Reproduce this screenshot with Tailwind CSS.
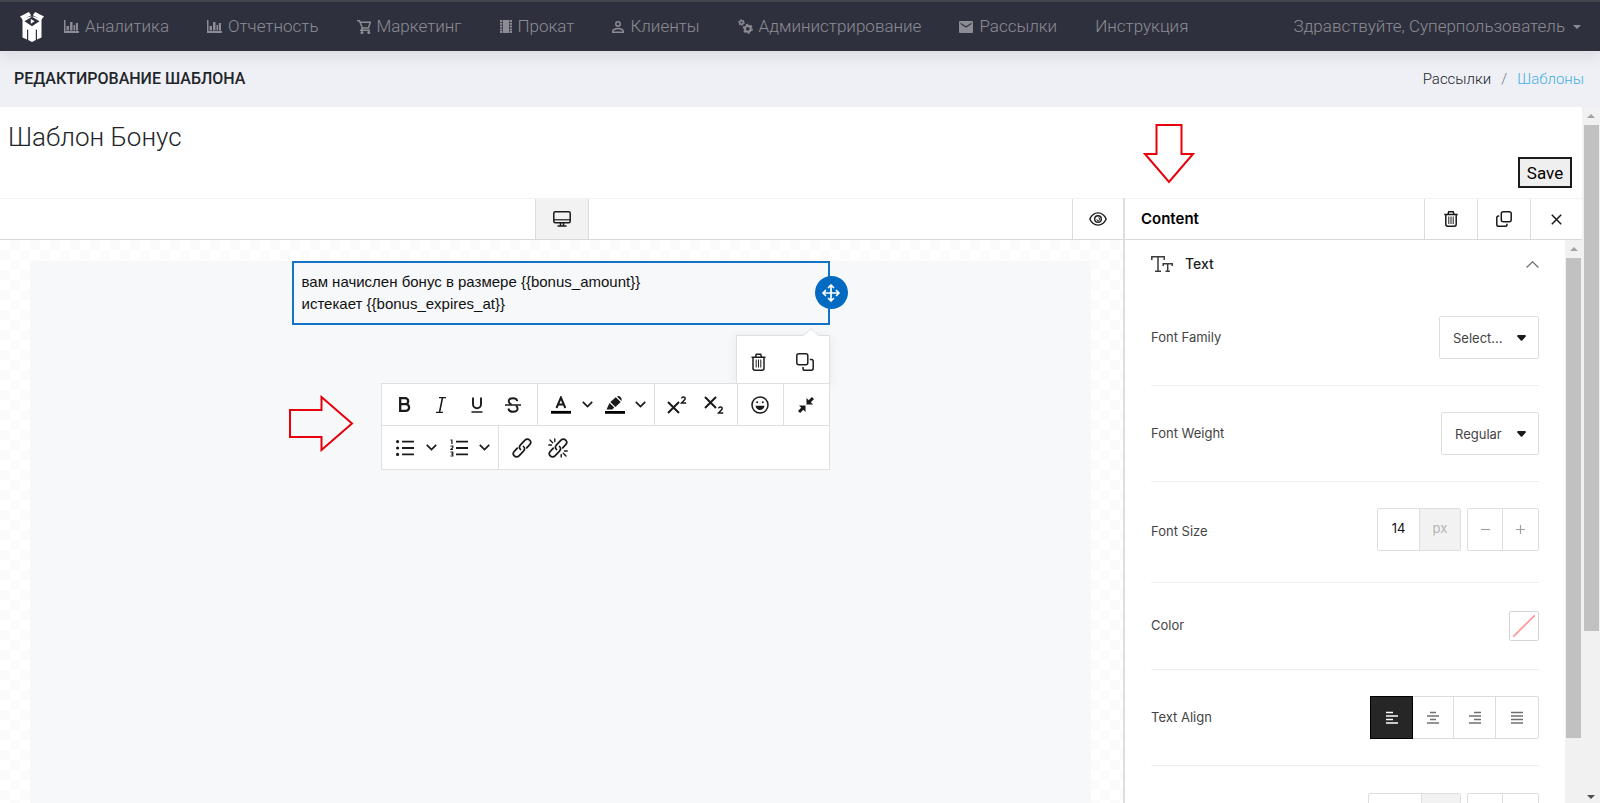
<!DOCTYPE html>
<html lang="ru">
<head>
    <meta charset="utf-8"/>
    <meta content="width=device-width, initial-scale=1.0" name="viewport"/>
    <title>Редактирование шаблона</title>
    <script src="https://cdn.jsdelivr.net/npm/@tailwindcss/browser@4"></script>
</head>
<body class="h-screen flex flex-col overflow-hidden bg-white font-['Roboto','Noto_Sans',sans-serif] text-[#212529]">

    <!-- Top navigation -->
    <header class="relative z-10 h-[51px] shrink-0 flex items-center pl-5 pr-[19px] bg-[#2f303d] border-t-2 border-[#43464e] shadow-[0_4px_16px_rgba(30,50,60,0.12)] text-[#8c8d94] text-[17px] font-light">
        <a href="#" class="mr-5" aria-label="Главная">
            <svg class="w-6 h-[30px]" viewBox="0 0 24 30" fill="#fff">
                <path d="M0 4.500 8.800 0l2.400 3.200L2.800 7.800zM24 4.500 15.200 0l-2.400 3.200 8.400 4.600z"/>
                <path d="M2.500 7 12 4l9.500 3v18.500l-4.500 2V17.200l-1.200.9V28L12 30l-3.800-2v-9.900L7 17.200v10.300l-4.500-2z"/>
                <path d="m4.500 9.300 7.500-4.500 7.500 4.500-7.500 4.900z" fill="#2f303d"/>
                <path d="M12 2v4" stroke="#2f303d" stroke-width="1.500"/>
                <path d="M10.800 7v4.800L14.600 9.300z"/>
            </svg>
        </a>
        <nav class="flex items-center gap-[38px]">
            <a href="#" class="flex items-center gap-1.5">
                <svg class="w-[15px] h-[13px]" viewBox="0 0 15 13" fill="currentColor"><path d="M0 0h1.500v11H15v2H0zM2.500 6H5v4.500H2.500zM6 2h2.500v8.500H6zM9.500 5H11v5.500H9.500zM11.800 3H14v7.500h-2.200z"/></svg>
                Аналитика
            </a>
            <a href="#" class="flex items-center gap-1.5">
                <svg class="w-[15px] h-[13px]" viewBox="0 0 15 13" fill="currentColor"><path d="M0 0h1.500v11H15v2H0zM2.500 6H5v4.500H2.500zM6 2h2.500v8.500H6zM9.500 5H11v5.500H9.500zM11.800 3H14v7.500h-2.200z"/></svg>
                Отчетность
            </a>
            <a href="#" class="flex items-center gap-1.5">
                <svg class="w-[14px] h-[14px]" viewBox="0 0 14 14" fill="none" stroke="currentColor" stroke-width="1.500"><path d="M0 .8h2.400l3 7.200h6l2-5.800H3M5.400 8 4 10.300h9"/><circle cx="5" cy="12.500" r=".8"/><circle cx="11.800" cy="12.500" r=".8"/></svg>
                Маркетинг
            </a>
            <a href="#" class="flex items-center gap-1.5">
                <svg class="w-3 h-[13px]" viewBox="0 0 12 13" fill="currentColor"><path d="M3 0h6v13H3zM0 0h2.400v2H0zM0 2.800h2.400v2H0zM0 5.600h2.400v2H0zM0 8.400h2.400v2H0zM0 11h2.400v2H0zM9.600 0H12v2H9.600zM9.600 2.800H12v2H9.600zM9.600 5.600H12v2H9.600zM9.600 8.400H12v2H9.600zM9.600 11H12v2H9.600z"/></svg>
                Прокат
            </a>
            <a href="#" class="flex items-center gap-1.5">
                <svg class="w-3 h-3" viewBox="0 0 12 12" fill="none" stroke="currentColor" stroke-width="1.500"><circle cx="6" cy="3" r="2.200"/><path d="M.8 11.200V10C.8 8.500 4 7.500 6 7.500s5.200 1 5.200 2.500v1.200z"/></svg>
                Клиенты
            </a>
            <a href="#" class="flex items-center gap-1.5">
                <svg class="w-[15px] h-[15px]" viewBox="0 0 15 15" fill="none" stroke="currentColor"><circle cx="3.500" cy="3.500" r="1.800" stroke-width="1.400"/><circle cx="3.500" cy="3.500" r="2.900" stroke-width="1" stroke-dasharray="1.500 1.500"/><circle cx="9.800" cy="9.800" r="2.900" stroke-width="2"/><circle cx="9.800" cy="9.800" r="4.400" stroke-width="1.300" stroke-dasharray="2.300 2.300"/></svg>
                Администрирование
            </a>
            <a href="#" class="flex items-center gap-1.5">
                <svg class="w-[14px] h-[12px]" viewBox="0 0 14 12" fill="currentColor"><path fill-rule="evenodd" d="M1 0h12a1 1 0 0 1 1 1v10a1 1 0 0 1-1 1H1a1 1 0 0 1-1-1V1a1 1 0 0 1 1-1zm.5 1.800v1.300L7 6.700l5.500-3.600V1.800L7 5.300z"/></svg>
                Рассылки
            </a>
            <a href="#">Инструкция</a>
        </nav>
        <button type="button" class="ml-auto flex items-center gap-2">
            Здравствуйте, Суперпользователь
            <svg class="w-2 h-1" viewBox="0 0 8 4" fill="currentColor"><path d="M0 0h8L4 4z"/></svg>
        </button>
    </header>

    <!-- Page title bar -->
    <div class="h-14 shrink-0 flex items-center justify-between px-[14px] pr-4 bg-[#eff0f6]">
        <h1 class="text-base font-medium uppercase">Редактирование шаблона</h1>
        <nav class="flex gap-2.5 text-[15px] font-light">
            <a href="#">Рассылки</a>
            <span class="text-[#6c757d]">/</span>
            <a href="#" class="text-[#44b1e4]">Шаблоны</a>
        </nav>
    </div>

    <div class="flex-1 min-h-0 flex">
        <main class="flex-1 min-w-0 flex flex-col">
            <div class="relative h-[91px] shrink-0 px-2 pt-3 flex justify-between">
                <h2 class="text-[26px] leading-9 font-light">Шаблон Бонус</h2>
                <svg class="absolute right-[387px] top-4 w-[52px] h-[61px]" viewBox="0 0 52 61" fill="none" stroke="#e8000b" stroke-width="2"><path d="M13.500 2h25v29H50L26 59 2 31h11.500z"/></svg>
                <button type="button" class="self-end mb-2.5 mr-0.5 w-[54px] h-[31px] border-2 border-[#1b1b1b] bg-[#efefef] text-black text-[17px] leading-6">Save</button>
            </div>

            <div class="flex-1 min-h-0 flex">
                <!-- Canvas column -->
                <section class="flex-1 min-w-0 flex flex-col">
                    <div class="h-[42px] shrink-0 flex border-t border-b border-t-[#f3f3f3] border-b-[#d9d9d9]">
                        <div class="flex-1"></div>
                        <button type="button" aria-label="Desktop" class="w-[54px] flex items-center justify-center bg-[#f2f2f2] border-x border-[#dcdcdc]">
                            <svg class="w-[18px] h-4" viewBox="0 0 18 16" fill="none" stroke="#1a1a1a" stroke-width="1.500"><rect x=".8" y=".8" width="16.400" height="11" rx="1.500"/><path d="M1 8.800h16" stroke-width="1.200"/><path d="M7.500 12v2.500M10.500 12v2.500M4.500 15h9"/></svg>
                        </button>
                        <div class="flex-1 flex justify-end">
                            <button type="button" aria-label="Preview" class="w-[51px] flex items-center justify-center border-l border-[#dcdcdc]">
                                <svg class="w-[18px] h-[14px]" viewBox="0 0 18 14" fill="none" stroke="#1a1a1a" stroke-width="1.400"><path d="M.8 7C2.500 3.300 5.400.9 9 .9S15.500 3.300 17.200 7C15.500 10.700 12.600 13.100 9 13.100S2.500 10.700.8 7z"/><circle cx="9" cy="7" r="3.300"/><path d="M9.300 5.700A1.500 1.500 0 1 1 7.700 7.300" stroke-width="1"/></svg>
                            </button>
                        </div>
                    </div>

                    <div class="flex-1 min-h-0 pt-[21px] pl-[30px] pr-8 flex bg-[conic-gradient(#fbfbfb_25%,#fff_0_50%,#fbfbfb_0_75%,#fff_0)] bg-size-[20px_20px]">
                        <div class="flex-1 bg-[#f6f8fa] flex justify-center">
                            <div class="w-[538px]">
                                <div class="relative h-16 border-2 border-[#1473c6] px-2 pt-2 font-['Liberation_Sans',Arial,sans-serif] text-[15px] leading-[22px] text-[#111]">
                                    <p>вам начислен бонус в размере {{bonus_amount}}</p>
                                    <p>истекает {{bonus_expires_at}}</p>
                                    <button type="button" aria-label="Move" class="absolute -right-5 top-[13px] size-[33px] rounded-full bg-[#026bc1] flex items-center justify-center">
                                        <svg class="size-[18px]" viewBox="0 0 18 18" fill="none" stroke="#fff" stroke-width="1.700" stroke-linecap="round" stroke-linejoin="round"><path d="M9 1v16M1 9h16M6.500 3.500 9 1l2.500 2.500M6.500 14.500 9 17l2.500-2.500M3.500 6.500 1 9l2.500 2.500M14.500 6.500 17 9l-2.500 2.500"/></svg>
                                    </button>
                                </div>

                                <div class="relative mt-2.5 ml-auto w-[94px] h-12 flex items-center justify-around pt-1 bg-white border border-b-0 border-[#dfe0e1] shadow-[0_2px_10px_rgba(0,0,0,0.08)]">
                                    <svg class="absolute -top-2 right-2.5 w-4 h-2" viewBox="0 0 16 8" fill="#fff" stroke="#dfe0e1"><path d="M0 8 8 .700 16 8"/></svg>
                                    <button type="button" aria-label="Delete" class="p-2">
                                        <svg class="w-[15px] h-[18px]" viewBox="0 0 15 18" fill="none" stroke="#1f1f1f" stroke-width="1.500"><path d="M.5 4.300h14M4.500 4 5.300 1.200h4.400L10.500 4M2 4.500v10.800q0 1.900 1.900 1.900h7.200q1.900 0 1.900-1.900V4.500"/><path d="M5.200 6.500v8M7.500 6.500v8M9.800 6.500v8" stroke-width="1"/></svg>
                                    </button>
                                    <button type="button" aria-label="Duplicate" class="p-2">
                                        <svg class="size-[18px]" viewBox="0 0 18 18" fill="none" stroke="#1f1f1f" stroke-width="1.500"><rect x=".8" y=".8" width="11" height="11" rx="2"/><path d="M13.800 6.500h1.600q1.800 0 1.800 1.800v7q0 1.900-1.900 1.900H8.800q-1.800 0-1.800-1.800V14"/></svg>
                                    </button>
                                </div>

                                <!-- Text formatting toolbar -->
                                <div class="relative ml-auto w-[449px] bg-white border border-[#dfe0e1] text-[#1a1a1a]">
                                    <svg class="absolute right-[475px] top-[11px] w-[66px] h-[57px]" viewBox="0 0 66 57" fill="none" stroke="#e8000b" stroke-width="2"><path d="M2 15h31.500V2L64 28.500 33.500 55V42H2z"/></svg>
                                    <div class="flex h-[42px] border-b border-[#dfe0e1]">
                                        <div class="w-[156px] flex items-center justify-around px-1.5 border-r border-[#dfe0e1]">
                                            <button type="button" aria-label="Bold" class="w-9 flex justify-center">
                                                <svg class="w-3 h-[15px]" viewBox="0 0 12 15" fill="none" stroke="currentColor" stroke-width="2.300"><path d="M1.200 1.200v12.600h5.600a3.300 3.300 0 0 0 0-6.600H1.200h5a3 3 0 0 0 0-6z"/></svg>
                                            </button>
                                            <button type="button" aria-label="Italic" class="w-9 flex justify-center">
                                                <svg class="w-[10px] h-4" viewBox="0 0 10 16" fill="none" stroke="currentColor" stroke-width="1.300"><path d="M3 .7h7M0 15.300h7"/><path d="M6.500.7 3.500 15.300" stroke-width="1.600"/></svg>
                                            </button>
                                            <button type="button" aria-label="Underline" class="w-9 flex justify-center">
                                                <svg class="w-3 h-4" viewBox="0 0 12 16" fill="none" stroke="currentColor" stroke-width="1.900"><path d="M2 .5v6.700a4 4 0 0 0 8 0V.5"/><path d="M.5 15h11" stroke-width="1.500"/></svg>
                                            </button>
                                            <button type="button" aria-label="Strikethrough" class="w-9 flex justify-center">
                                                <svg class="w-4 h-4" viewBox="0 0 16 16" fill="none" stroke="currentColor" stroke-width="1.900"><path d="M12.300 4.200C12 2.200 10.300 1.200 8 1.200c-2.500 0-4.300 1.200-4.300 3.100 0 1.500 1 2.500 2.800 3M3.400 11.500c.3 2.200 2.100 3.300 4.800 3.300 2.500 0 4.400-1.200 4.400-3.200 0-1.300-.6-2.200-1.700-2.800"/><path d="M0 8h16" stroke-width="1.500"/></svg>
                                            </button>
                                        </div>
                                        <div class="w-[117px] flex items-center border-r border-[#dfe0e1] pl-[11px]">
                                            <button type="button" aria-label="Text color" class="w-6 flex justify-center">
                                                <svg class="w-5 h-[18px]" viewBox="0 0 20 18" fill="none" stroke="currentColor" stroke-width="2"><path d="M5.500 12 9.900 1.500 14.300 12M7.300 8.500h5.200"/><path d="M0 16.300h20" stroke-width="2.800" stroke="#000"/></svg>
                                            </button>
                                            <button type="button" aria-label="Text color options" class="w-[30px] flex justify-center">
                                                <svg class="w-[11px] h-[7px]" viewBox="0 0 11 7" fill="none" stroke="currentColor" stroke-width="1.700"><path d="m.8.8 4.700 4.700L10.200.8"/></svg>
                                            </button>
                                            <button type="button" aria-label="Highlight" class="w-6 flex justify-center">
                                                <svg class="w-5 h-[18px]" viewBox="0 0 20 18" fill="currentColor"><path d="M1.500 13.500 4.500 7l4.800 4.600-2 1.900zM5.300 6l5.500-4.800L15.700 6l-5.300 5zM12 .600q1.500-1.200 3.300.2t1.200 4.200z"/><path d="M0 15h20v2.800H0z" fill="#000"/></svg>
                                            </button>
                                            <button type="button" aria-label="Highlight options" class="w-[27px] flex justify-center">
                                                <svg class="w-[11px] h-[7px]" viewBox="0 0 11 7" fill="none" stroke="currentColor" stroke-width="1.700"><path d="m.8.8 4.700 4.700L10.200.8"/></svg>
                                            </button>
                                        </div>
                                        <div class="w-[83px] flex items-center justify-around px-1 border-r border-[#dfe0e1]">
                                            <button type="button" aria-label="Superscript">
                                                <svg class="w-5 h-[18px]" viewBox="0 0 20 18" fill="none" stroke="currentColor" stroke-width="2"><path d="m1 6 11 11M12 6 1 17"/><path d="M14.500 2.300q.3-1.300 2-1.300t1.700 1.400c0 1.600-2.300 2.600-3.700 4.600h4.700" stroke-width="1.500"/></svg>
                                            </button>
                                            <button type="button" aria-label="Subscript">
                                                <svg class="w-5 h-[18px]" viewBox="0 0 20 18" fill="none" stroke="currentColor" stroke-width="2"><path d="m1 1 11 11M12 1 1 12"/><path d="M14.500 12.300q.3-1.300 2-1.300t1.700 1.400c0 1.600-2.300 2.600-3.700 4.600h4.700" stroke-width="1.500"/></svg>
                                            </button>
                                        </div>
                                        <button type="button" aria-label="Emoji" class="w-[46px] flex items-center justify-center border-r border-[#dfe0e1]">
                                            <svg class="size-[18px]" viewBox="0 0 18 18" fill="none" stroke="currentColor" stroke-width="1.500"><circle cx="9" cy="9" r="8"/><path d="M4.500 9.800h9c-.3 2.700-2.200 4.200-4.500 4.200s-4.200-1.500-4.500-4.200z" fill="currentColor" stroke="none"/><circle cx="6.200" cy="6.200" r="1" fill="currentColor" stroke="none"/><circle cx="11.800" cy="6.200" r="1" fill="currentColor" stroke="none"/></svg>
                                        </button>
                                        <button type="button" aria-label="Collapse" class="flex-1 flex items-center justify-center">
                                            <svg class="size-4" viewBox="0 0 16 16" fill="currentColor"><path d="M8.500 1v6.500H15l-2.200-2.200L16 2.100 13.900 0l-3.200 3.200zM7.500 15V8.500H1l2.200 2.200L0 13.900 2.100 16l3.200-3.200z"/></svg>
                                        </button>
                                    </div>
                                    <div class="flex h-[43px]">
                                        <div class="w-[117px] flex items-center pl-[11px] border-r border-[#dfe0e1]">
                                            <button type="button" aria-label="Bulleted list" class="w-6 flex justify-center">
                                                <svg class="w-[18px] h-4" viewBox="0 0 18 16" fill="none" stroke="currentColor" stroke-width="1.800"><path d="M6 1.600h12M6 8h12M6 14.400h12"/><path d="M1.600 1.600h.01M1.600 8h.01M1.600 14.400h.01" stroke-width="3.200" stroke-linecap="round"/></svg>
                                            </button>
                                            <button type="button" aria-label="Bulleted list options" class="w-[30px] flex justify-center">
                                                <svg class="w-[11px] h-[7px]" viewBox="0 0 11 7" fill="none" stroke="currentColor" stroke-width="1.700"><path d="m.8.8 4.700 4.700L10.200.8"/></svg>
                                            </button>
                                            <button type="button" aria-label="Numbered list" class="w-6 flex justify-center">
                                                <svg class="w-[18px] h-[18px]" viewBox="0 0 18 18" fill="none" stroke="currentColor" stroke-width="1.800"><path d="M6 2.600h12M6 9h12M6 15.400h12"/><path d="M.5 1h1.400v4M.5 7h2.300v1.600L.8 10.500H3M.5 13h2.300v4H.5M1 15h1.800" stroke-width="1.200"/></svg>
                                            </button>
                                            <button type="button" aria-label="Numbered list options" class="w-[27px] flex justify-center">
                                                <svg class="w-[11px] h-[7px]" viewBox="0 0 11 7" fill="none" stroke="currentColor" stroke-width="1.700"><path d="m.8.8 4.700 4.700L10.200.8"/></svg>
                                            </button>
                                        </div>
                                        <div class="flex items-center gap-4 pl-[13px]">
                                            <button type="button" aria-label="Link">
                                                <svg class="w-5 h-5" viewBox="0 0 20 20" fill="none" stroke="currentColor" stroke-width="1.700" stroke-linecap="round"><path d="M8.500 11.500a3.300 3.300 0 0 1 0-4.600l4.500-4.800a3.200 3.200 0 0 1 4.700 0 3.200 3.200 0 0 1 0 4.500l-3 3.200"/><path d="M11.500 8.500a3.300 3.300 0 0 1 0 4.600L7 17.900a3.200 3.200 0 0 1-4.700 0 3.200 3.200 0 0 1 0-4.500l3-3.200"/></svg>
                                            </button>
                                            <button type="button" aria-label="Remove link">
                                                <svg class="w-5 h-5" viewBox="0 0 20 20" fill="none" stroke="currentColor" stroke-width="1.700" stroke-linecap="round"><path d="M8.500 11.500a3.300 3.300 0 0 1 0-4.600l4.500-4.800a3.200 3.200 0 0 1 4.700 0 3.200 3.200 0 0 1 0 4.500l-3 3.200"/><path d="M11.500 8.500a3.300 3.300 0 0 1 0 4.600L7 17.900a3.200 3.200 0 0 1-4.700 0 3.200 3.200 0 0 1 0-4.500l3-3.200"/><path d="M6.800 1v2.500M2 2l2.700 2.700M.8 7h2.700M13.200 19v-2.500M18 18l-2.700-2.700M19.200 13h-2.700" stroke-width="1.400"/></svg>
                                            </button>
                                        </div>
                                    </div>
                                </div>
                            </div>
                        </div>
                    </div>
                </section>

                <!-- Settings panel -->
                <aside class="w-[459px] shrink-0 flex flex-col border-l-2 border-[#dedede] font-['Inter','Roboto',sans-serif]">
                    <div class="h-[42px] shrink-0 flex border-t border-b border-t-[#f3f3f3] border-b-[#d9d9d9]">
                        <h3 class="flex-1 flex items-center pl-4 text-[15px] font-semibold text-black">Content</h3>
                        <button type="button" aria-label="Delete" class="w-[53px] flex items-center justify-center border-l border-[#dcdcdc]">
                            <svg class="w-[14px] h-4" viewBox="0 0 14 16" fill="none" stroke="#1a1a1a" stroke-width="1.500"><path d="M.3 3.500h13.400M4 3.300l.8-2.500h4.400l.8 2.500M1.800 3.500v9.800q0 1.900 1.900 1.900h6.600q1.900 0 1.900-1.900V3.500"/><path d="M4.800 5.500v7.500M7 5.500v7.500M9.200 5.500v7.500" stroke-width="1"/></svg>
                        </button>
                        <button type="button" aria-label="Duplicate" class="w-[53px] flex items-center justify-center border-l border-[#dcdcdc]">
                            <svg class="size-4" viewBox="0 0 16 16" fill="none" stroke="#1a1a1a" stroke-width="1.500"><rect x="5.300" y=".8" width="9.900" height="9.900" rx="2"/><path d="M3.200 5H2.500Q.8 5 .8 6.800v6.600q0 1.800 1.800 1.800h6.600q1.800 0 1.800-1.800v-.7"/></svg>
                        </button>
                        <button type="button" aria-label="Close" class="w-[52px] flex items-center justify-center border-l border-[#dcdcdc]">
                            <svg class="size-[11px]" viewBox="0 0 11 11" fill="none" stroke="#1a1a1a" stroke-width="1.500"><path d="m.8.8 9.400 9.400M10.200.8.8 10.200"/></svg>
                        </button>
                    </div>

                    <div class="flex-1 min-h-0 flex">
                        <div class="flex-1 min-w-0 overflow-hidden pl-[26px] pr-[26px] text-[13px] text-[#444]">
                            <button type="button" class="w-full h-12 mb-0.5 flex items-center gap-3 text-sm font-medium text-[#222]">
                                <svg class="w-[22px] h-4" viewBox="0 0 22 16" fill="none" stroke="#3c3c3c" stroke-width="1.500"><path d="M.8 4V.8h12.400V4M7 .8v14.400M4 15.200h6M12.200 10V7.700h9V10M16.700 7.700v7.500M14.500 15.200h4.400"/></svg>
                                Text
                                <svg class="ml-auto w-[13px] h-[7px]" viewBox="0 0 13 7" fill="none" stroke="#777" stroke-width="1.400"><path d="M.6 6.500 6.500.8l5.900 5.700"/></svg>
                            </button>

                            <div class="h-24 flex items-center justify-between border-b border-[#efefef]">
                                <label for="font-family">Font Family</label>
                                <div class="relative">
                                    <select id="font-family" class="appearance-none w-[100px] h-[43px] pl-[13px] border border-[#dedede] rounded-xs bg-white text-[13px] leading-5"><option>Select...</option></select>
                                    <svg class="absolute right-[13px] top-[19px] w-[9px] h-[6px] pointer-events-none" viewBox="0 0 9 6" fill="#1a1a1a"><path d="M.9 0h7.200q1.300.7.400 1.800L5.200 5.500q-.7.600-1.400 0L.5 1.800Q-.4.700.9 0z"/></svg>
                                </div>
                            </div>
                            <div class="h-24 flex items-center justify-between border-b border-[#efefef]">
                                <label for="font-weight">Font Weight</label>
                                <div class="relative">
                                    <select id="font-weight" class="appearance-none w-[98px] h-[43px] pl-[13px] border border-[#dedede] rounded-xs bg-white text-[13px] leading-5"><option>Regular</option></select>
                                    <svg class="absolute right-[13px] top-[19px] w-[9px] h-[6px] pointer-events-none" viewBox="0 0 9 6" fill="#1a1a1a"><path d="M.9 0h7.200q1.300.7.400 1.800L5.200 5.500q-.7.600-1.400 0L.5 1.800Q-.4.700.9 0z"/></svg>
                                </div>
                            </div>
                            <div class="h-[101px] flex items-center justify-between border-b border-[#efefef]">
                                <label for="font-size">Font Size</label>
                                <div class="flex gap-1.5 pb-1.5">
                                    <div class="flex h-[43px] border border-[#dedede] rounded-xs">
                                        <input id="font-size" type="text" value="14" class="w-[41px] text-center text-[#111]">
                                        <span class="w-[41px] flex items-center justify-center bg-[#f2f2f2] border-l border-[#dedede] text-[#b4b4b4]">px</span>
                                    </div>
                                    <div class="flex h-[43px] border border-[#dedede] rounded-xs">
                                        <button type="button" aria-label="Decrease" class="w-[34px] flex items-center justify-center"><svg class="size-[9px]" viewBox="0 0 9 9" stroke="#a0a0a0" stroke-width="1.200"><path d="M0 4.500h9"/></svg></button>
                                        <button type="button" aria-label="Increase" class="w-9 flex items-center justify-center border-l border-[#dedede]"><svg class="size-[9px]" viewBox="0 0 9 9" stroke="#a0a0a0" stroke-width="1.200"><path d="M0 4.500h9M4.500 0v9"/></svg></button>
                                    </div>
                                </div>
                            </div>
                            <div class="h-[87px] flex items-center justify-between border-b border-[#efefef]">
                                <span>Color</span>
                                <button type="button" aria-label="Color" class="size-[30px] flex items-center justify-center border border-[#d5d5d5] rounded-xs">
                                    <svg class="size-[22px]" viewBox="0 0 22 22" fill="none" stroke="#f99" stroke-width="1.600"><path d="M0 22 22 0"/></svg>
                                </button>
                            </div>
                            <div class="h-24 flex items-center justify-between border-b border-[#efefef]">
                                <span>Text Align</span>
                                <div class="flex h-[43px] border border-[#dcdcdc] rounded-xs text-[#707070]">
                                    <button type="button" aria-label="Left" class="-m-px w-[43px] flex items-center justify-center bg-[#262626] border border-black text-white"><svg class="w-3 h-[13px]" viewBox="0 0 12 13" stroke="currentColor" stroke-width="1.500"><path d="M0 1.500h7M0 5h12M0 8.500h7M0 12h12"/></svg></button>
                                    <button type="button" aria-label="Center" class="w-[41px] flex items-center justify-center"><svg class="w-3 h-[13px]" viewBox="0 0 12 13" stroke="currentColor" stroke-width="1.500"><path d="M3 1.500h6M0 5h12M3 8.500h6M0 12h12"/></svg></button>
                                    <button type="button" aria-label="Right" class="w-[42px] flex items-center justify-center border-l border-[#dcdcdc]"><svg class="w-3 h-[13px]" viewBox="0 0 12 13" stroke="currentColor" stroke-width="1.500"><path d="M5 1.500h7M0 5h12M5 8.500h7M0 12h12"/></svg></button>
                                    <button type="button" aria-label="Justify" class="w-[43px] flex items-center justify-center border-l border-[#dcdcdc]"><svg class="w-3 h-[13px]" viewBox="0 0 12 13" stroke="currentColor" stroke-width="1.500"><path d="M0 1.500h12M0 5h12M0 8.500h12M0 12h12"/></svg></button>
                                </div>
                            </div>
                            <div class="h-24 flex items-center justify-end gap-1.5">
                                <div class="flex h-[43px] border border-[#dedede] rounded-xs">
                                    <input type="text" aria-label="Line Height" class="w-[52px] text-center">
                                    <span class="w-[39px] bg-[#f2f2f2] border-l border-[#dedede]"></span>
                                </div>
                                <div class="flex h-[43px] border border-[#dedede] rounded-xs">
                                    <button type="button" aria-label="Decrease" class="w-[34px]"></button>
                                    <button type="button" aria-label="Increase" class="w-9 border-l border-[#dedede]"></button>
                                </div>
                            </div>
                        </div>
                        <!-- Panel scrollbar -->
                        <div class="w-[17px] shrink-0 flex flex-col items-center bg-[#f1f1f1]">
                            <div class="h-[18px] flex items-center"><svg class="w-2 h-1" viewBox="0 0 8 4" fill="#a3a3a3"><path d="M0 4h8L4 0z"/></svg></div>
                            <div class="w-[15px] h-[480px] bg-[#c1c1c1]"></div>
                        </div>
                    </div>
                </aside>
            </div>
        </main>
        <!-- Page scrollbar -->
        <div class="w-[18px] shrink-0 flex flex-col items-center bg-[#f1f1f1]">
            <div class="h-[18px] flex items-center"><svg class="w-2 h-1" viewBox="0 0 8 4" fill="#a3a3a3"><path d="M0 4h8L4 0z"/></svg></div>
            <div class="w-[15px] h-[506px] bg-[#c1c1c1]"></div>
            <div class="mt-auto h-3 flex items-center"><svg class="w-2 h-1" viewBox="0 0 8 4" fill="#505050"><path d="M0 0h8L4 4z"/></svg></div>
        </div>
    </div>
</body>
</html>
